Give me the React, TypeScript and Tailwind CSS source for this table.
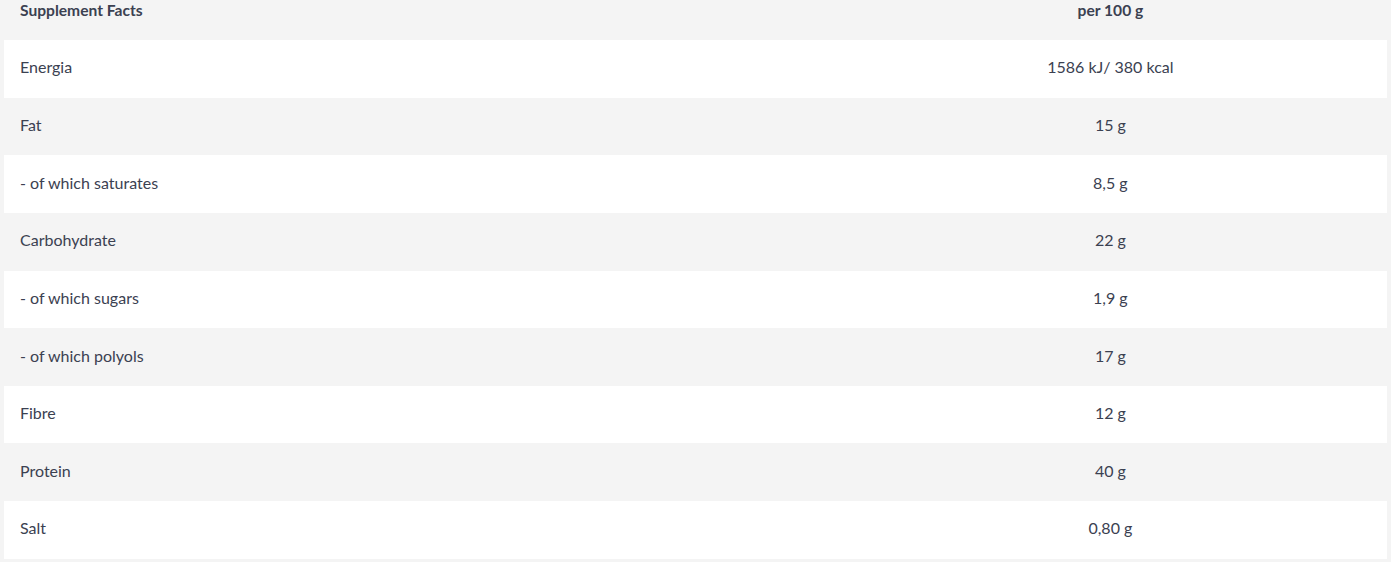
const rows: [string, string][] = [
    ['Energia', '1586 kJ/ 380 kcal'],
    ['Fat', '15 g'],
    ['- of which saturates', '8,5 g'],
    ['Carbohydrate', '22 g'],
    ['- of which sugars', '1,9 g'],
    ['- of which polyols', '17 g'],
    ['Fibre', '12 g'],
    ['Protein', '40 g'],
    ['Salt', '0,80 g'],
];

export default function App() {
    return (
        <div className="min-h-[562px] bg-[#f4f4f4] px-[4px] text-[16px] text-[#3b4151] font-['Lato','Liberation_Sans',sans-serif]">
            {/* Header */}
            <div className="grid grid-cols-[60%_40%] h-[40px] items-start font-bold text-[15.6px]">
                <div className="pl-[16px] leading-[21px]">Supplement Facts</div>
                <div className="text-center leading-[21px]">per 100 g</div>
            </div>

            {/* Rows */}
            <div className="flex flex-col">
                {rows.map(([label, value], i) => (
                    <div
                        key={label}
                        className={`grid grid-cols-[60%_40%] h-[57.65px] items-center pb-[3px] ${i % 2 === 0 ? 'bg-white' : 'bg-[#f4f4f4]'}`}
                    >
                        <div className="pl-[16px]">{label}</div>
                        <div className="text-center">{value}</div>
                    </div>
                ))}
            </div>
        </div>
    );
}
